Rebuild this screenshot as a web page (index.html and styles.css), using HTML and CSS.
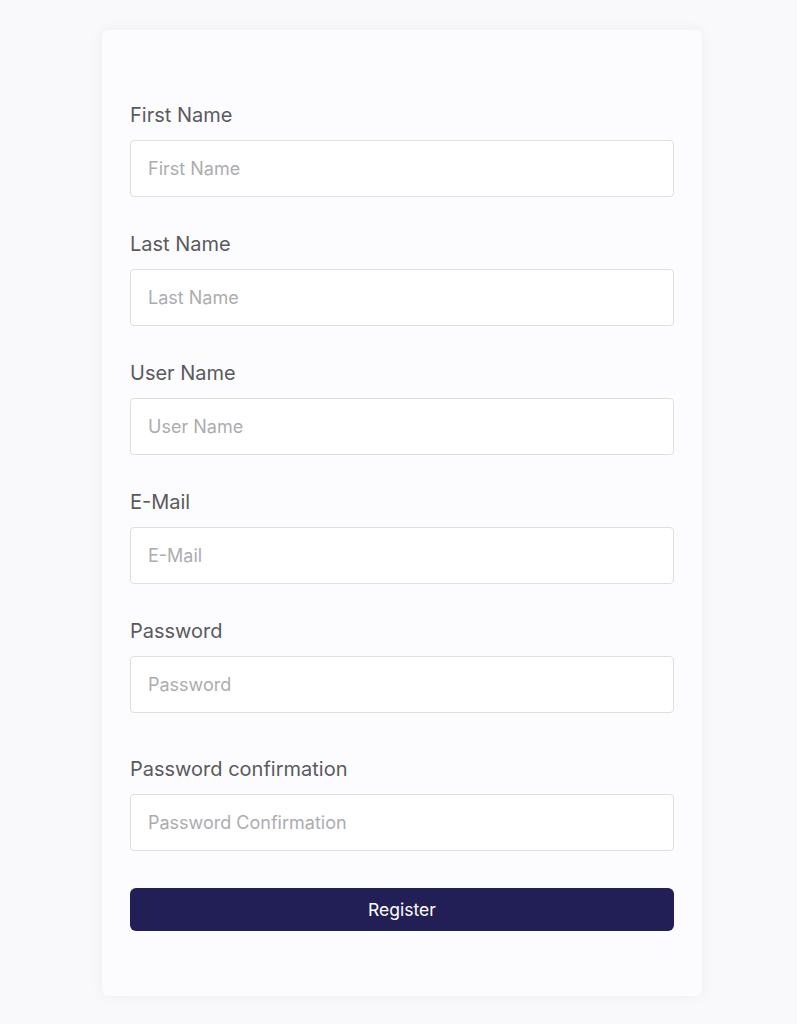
FILE: index.html
```html
<!DOCTYPE html>
<html lang="en">
<head>
<meta charset="utf-8">
<title>Register</title>
<link rel="stylesheet" href="styles.css">
</head>
<body>
<main class="page">
  <form class="card">
    <div class="field">
      <label class="label" for="fn">First Name</label>
      <input class="input" id="fn" type="text" placeholder="First Name">
    </div>
    <div class="field">
      <label class="label" for="ln">Last Name</label>
      <input class="input" id="ln" type="text" placeholder="Last Name">
    </div>
    <div class="field">
      <label class="label" for="un">User Name</label>
      <input class="input" id="un" type="text" placeholder="User Name">
    </div>
    <div class="field">
      <label class="label" for="em">E-Mail</label>
      <input class="input" id="em" type="text" placeholder="E-Mail">
    </div>
    <div class="field">
      <label class="label" for="pw">Password</label>
      <input class="input" id="pw" type="password" placeholder="Password">
    </div>
    <div class="field field-wide">
      <label class="label" for="pc">Password confirmation</label>
      <input class="input" id="pc" type="password" placeholder="Password Confirmation">
    </div>
    <button class="btn" type="button">Register</button>
  </form>
</main>
</body>
</html>
```
FILE: styles.css
```css
html, body {
  margin: 0;
  padding: 0;
  background: #f9f9fc;
  font-family: "Inter", "Open Sans", sans-serif;
}
.page {
  padding: 30px 0 28px 102px;
}
.card {
  width: 600px;
  box-sizing: border-box;
  background: #fcfcfe;
  border-radius: 6px;
  box-shadow: 0 0 14px rgba(0, 0, 0, 0.05);
  padding: 73px 28px 65px;
  display: flex;
  flex-direction: column;
}
.field {
  display: flex;
  flex-direction: column;
  gap: 13px;
  margin-bottom: 35px;
}
.field-wide {
  margin-top: 9px;
  margin-bottom: 37px;
}
.label {
  font-size: 20px;
  line-height: 24px;
  color: #5a5a5e;
}
.input {
  box-sizing: border-box;
  height: 57px;
  width: 100%;
  border: 1px solid #dfdfe2;
  border-radius: 4px;
  background: #fff;
  padding: 0 17px;
  font-family: inherit;
  font-size: 18px;
  color: #333;
  outline: none;
}
.input::placeholder {
  color: #acacb0;
}
.btn {
  height: 43px;
  border: none;
  border-radius: 6px;
  background: #221f56;
  color: #fff;
  font-family: inherit;
  font-size: 17.5px;
  cursor: pointer;
}
```
